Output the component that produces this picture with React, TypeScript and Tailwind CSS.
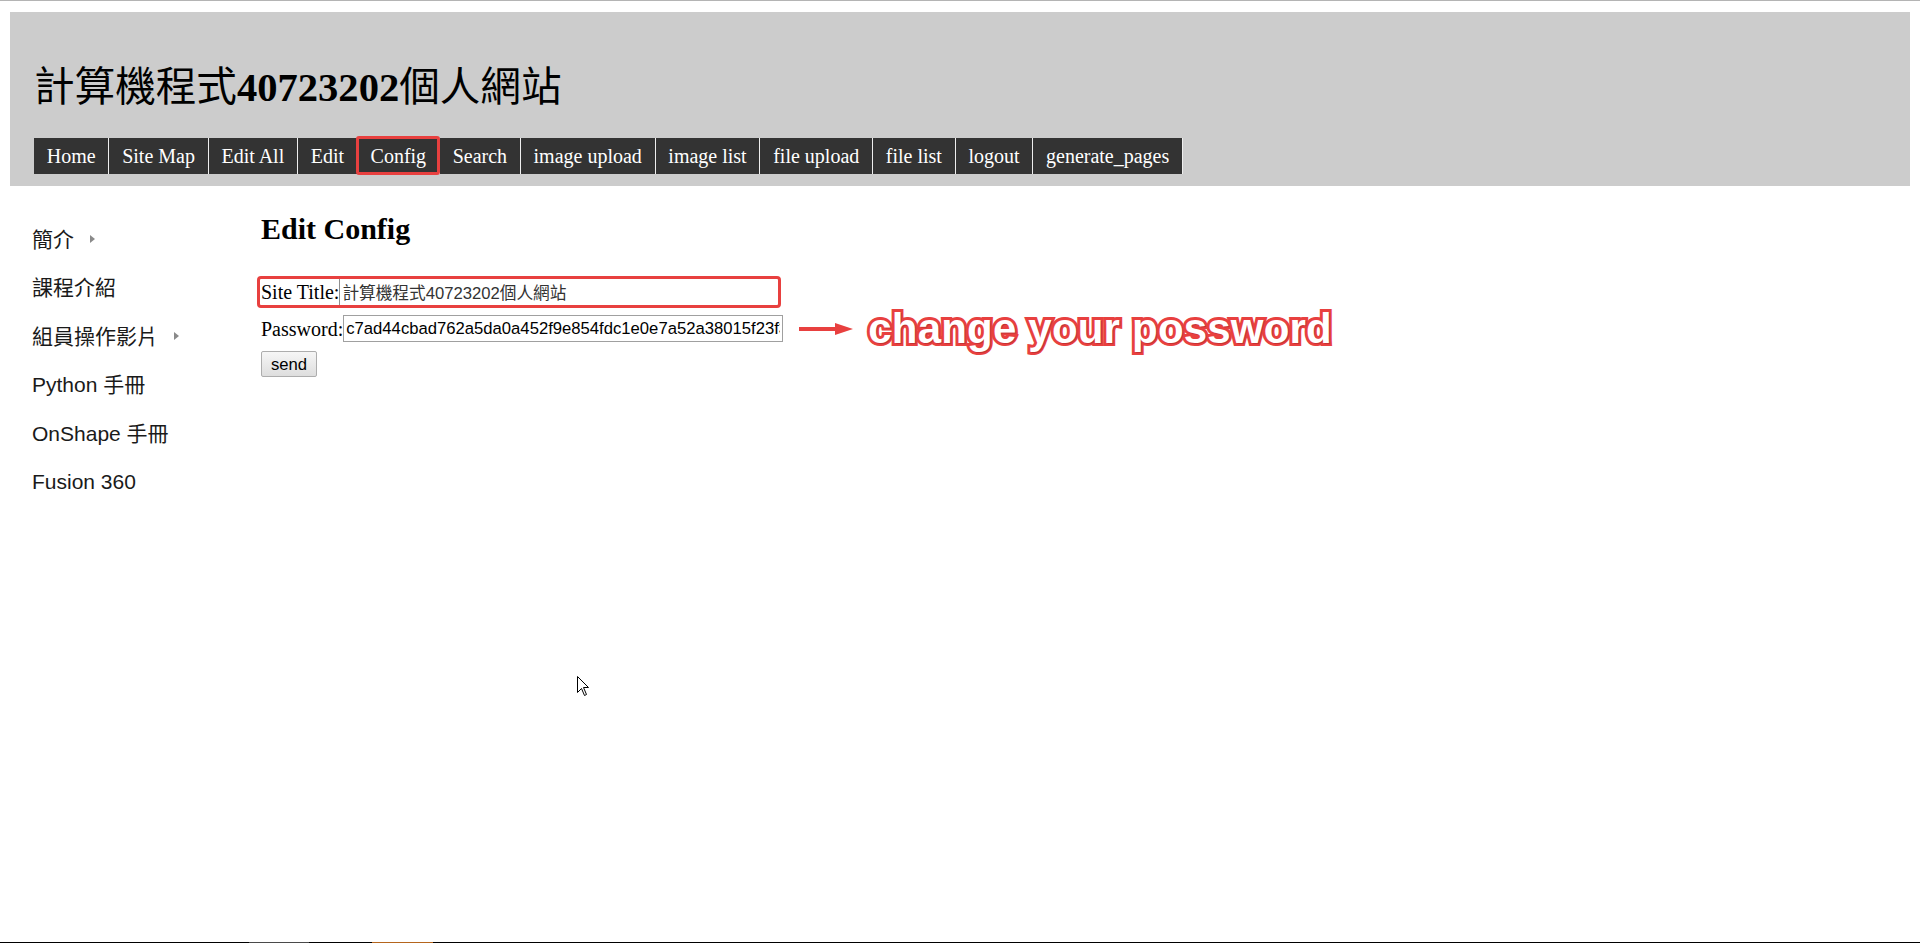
const MENU = [
  "Home",
  "Site Map",
  "Edit All",
  "Edit",
  "Config",
  "Search",
  "image upload",
  "image list",
  "file upload",
  "file list",
  "logout",
  "generate_pages",
];

const SIDE = [
  { label: "簡介", arrow: true },
  { label: "課程介紹", arrow: false },
  { label: "組員操作影片", arrow: true },
  { label: "Python 手冊", arrow: false },
  { label: "OnShape 手冊", arrow: false },
  { label: "Fusion 360", arrow: false },
];

const SERIF = "font-['Liberation_Serif','Noto_Sans_CJK_TC',serif]";
const SANS = "font-['Liberation_Sans','Noto_Sans_CJK_TC',sans-serif]";

function MenuBar() {
  return (
    <nav className="mt-[27px] flex h-[36px] self-start">
      {MENU.map((item) => (
        <div
          key={item}
          className={`relative flex h-full items-center border-r border-[#eeeeee] bg-[#333333] px-[12.75px] text-[20px] text-white ${SERIF}`}
        >
          {item}
          {item === "Config" && (
            <span className="absolute -left-[2px] -top-[2px] -right-[1px] -bottom-[1px] rounded-[3px] border-[3px] border-[#e8403f]" />
          )}
        </div>
      ))}
    </nav>
  );
}

function Sidebar() {
  return (
    <aside className={`w-[251px] shrink-0 pl-[22px] pt-[29px] ${SANS}`}>
      {SIDE.map((s) => (
        <div key={s.label} className="flex h-[48.5px] items-center text-[21px] text-[#1a1a1a]">
          {s.label}
          {s.arrow && (
            <svg width="5" height="8" viewBox="0 0 5 8" className="ml-4">
              <path d="M0 0 L5 4 L0 8 Z" fill="#8a8a8a" />
            </svg>
          )}
        </div>
      ))}
    </aside>
  );
}

function ConfigForm() {
  return (
    <main className="relative flex-1">
      <h2 className={`mt-[25px] h-[35px] text-[30px] leading-[35px] font-bold text-black ${SERIF}`}>
        Edit Config
      </h2>

      <div className={`relative mt-[32px] flex h-[28px] items-center text-[20px] text-black ${SERIF}`}>
        <span>Site Title:</span>
        <input
          readOnly
          value="計算機程式40723202個人網站"
          className={`h-[28px] w-[440px] border border-[#8f8f8f] bg-white px-[2px] text-[16.67px] text-[#333333] outline-none ${SANS}`}
        />
        <span className="absolute -left-[4px] -top-[2px] h-[32px] w-[524px] rounded-[4px] border-[3px] border-[#e8403f]" />
      </div>

      <div className={`mt-[9px] flex h-[27px] items-center text-[20px] text-black ${SERIF}`}>
        <span>Password:</span>
        <input
          readOnly
          value="c7ad44cbad762a5da0a452f9e854fdc1e0e7a52a38015f23f3eab1d80b931dd472634dfac71cd34ebc35d16ab7fb8a90c81f975113d6c7538dc69dd8de9077ec"
          className={`h-[27px] w-[440px] border border-[#a0a0a0] bg-white px-[2px] text-[16.67px] text-black outline-none ${SANS}`}
        />
        <svg width="54" height="14" viewBox="0 0 54 14" className="ml-[16px]">
          <path d="M0 7 H40" stroke="#e8403f" strokeWidth="4" />
          <path d="M36 1 L54 7 L36 13 Z" fill="#e8403f" />
        </svg>
        <span
          className={`ml-[15px] text-[42px] leading-none font-bold tracking-[0.2px] text-white [-webkit-text-stroke:6px_#e8403f] [paint-order:stroke_fill] [text-shadow:1px_1px_0_#c63234] ${SANS}`}
        >
          change your possword
        </span>
      </div>

      <button
        className={`mt-[9px] h-[26px] w-[56px] rounded-[2px] border border-[#adadad] bg-gradient-to-b from-[#f6f6f6] to-[#dedede] text-[16.67px] text-black ${SANS}`}
      >
        send
      </button>
    </main>
  );
}

export default function App() {
  return (
    <div className="relative flex min-h-[943px] flex-col bg-white">
      <div className="h-px bg-[#b4b4b4]" />
      <div className="flex-1 px-[10px] pt-[11px]">
        <header className="flex h-[174px] flex-col bg-[#cccccc] pl-[24px]">
          <h1 className={`mt-[53px] h-[46px] text-[40.6px] leading-[46px] font-bold text-black ${SERIF}`}>
            <span className="font-normal">計算機程式</span>40723202
            <span className="font-normal">個人網站</span>
          </h1>
          <MenuBar />
        </header>
        <div className="flex">
          <Sidebar />
          <ConfigForm />
        </div>
      </div>
      <div className="flex h-px bg-black">
        <div className="ml-[249px] w-[60px] bg-[#4a4a4a]" />
        <div className="ml-[63px] w-[61px] bg-[#b5651d]" />
      </div>
      <svg
        width="13"
        height="21"
        viewBox="0 0 13 21"
        className="absolute left-[577px] top-[676px]"
      >
        <path
          d="M0.5 0.5 L0.5 16.5 L4.5 12.5 L7.5 19.5 L9.5 18.5 L6.5 11.5 L11.5 11.5 Z"
          fill="white"
          stroke="black"
          strokeWidth="1"
        />
      </svg>
    </div>
  );
}
